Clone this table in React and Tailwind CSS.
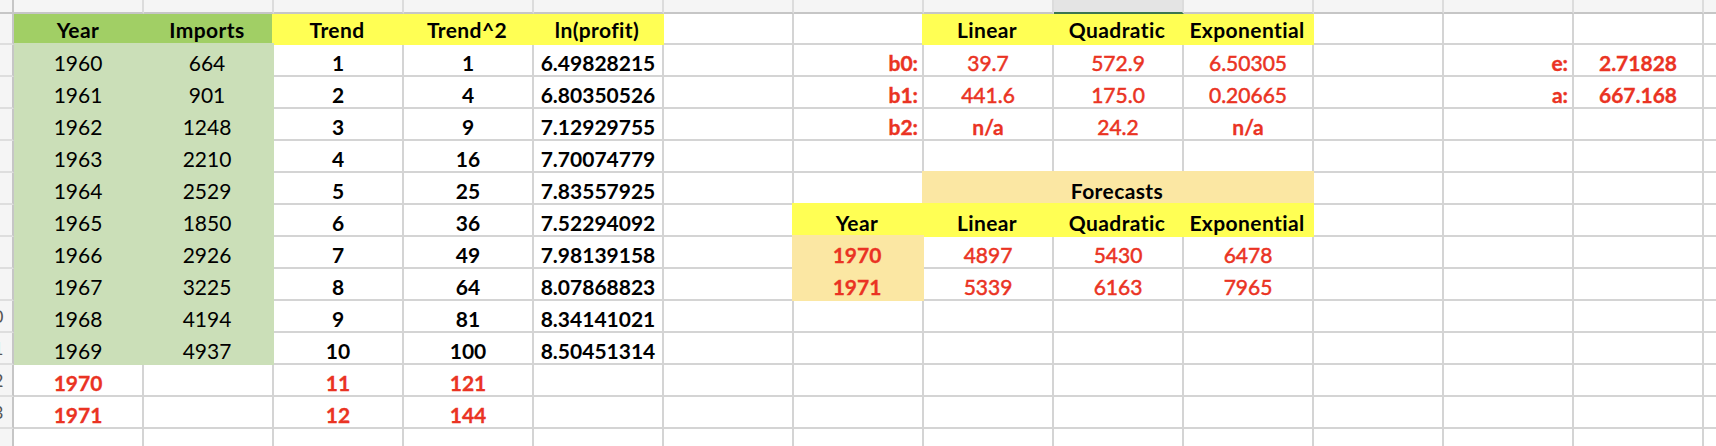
import React from "react";

const LETTERS = ["A", "B", "C", "D", "E", "F", "G", "H", "I", "J", "K", "L", "M", "N"];

const KIND = {
  gh: { fill: "bg-[#a1cf65]", text: "font-bold text-black justify-center tracking-[0.4px]" },
  gb: { fill: "bg-[#cbdfb8]", text: "font-normal text-black justify-center" },
  yh: { fill: "bg-[#ffff54]", text: "font-bold text-black justify-center tracking-[0.4px]" },
  th: { fill: "bg-[#fbe7a3]", text: "font-bold text-black justify-center tracking-[0.4px]" },
  tr: { fill: "bg-[#fbe7a3]", text: "font-bold text-[#ea3323] justify-center [-webkit-text-stroke:0.3px_#ea3323]" },
  b: { text: "font-bold text-black justify-center" },
  r: { text: "font-normal text-[#ea3323] justify-center [-webkit-text-stroke:0.5px_#ea3323]" },
  rb: { text: "font-bold text-[#ea3323] justify-center [-webkit-text-stroke:0.3px_#ea3323]" },
  rl: { text: "font-bold text-[#ea3323] justify-end pr-[4px] [-webkit-text-stroke:0.4px_#ea3323]" },
};

const DATA = {
  1: { A: ["Year", "gh"], B: ["Imports", "gh"], C: ["Trend", "yh"], D: ["Trend^2", "yh"], E: ["ln(profit)", "yh"], H: ["Linear", "yh"], I: ["Quadratic", "yh"], J: ["Exponential", "yh"] },
  2: { A: ["1960", "gb"], B: ["664", "gb"], C: ["1", "b"], D: ["1", "b"], E: ["6.49828215", "b"], G: ["b0:", "rl"], H: ["39.7", "r"], I: ["572.9", "r"], J: ["6.50305", "r"], L: ["e:", "rl"], M: ["2.71828", "rb"] },
  3: { A: ["1961", "gb"], B: ["901", "gb"], C: ["2", "b"], D: ["4", "b"], E: ["6.80350526", "b"], G: ["b1:", "rl"], H: ["441.6", "r"], I: ["175.0", "r"], J: ["0.20665", "r"], L: ["a:", "rl"], M: ["667.168", "rb"] },
  4: { A: ["1962", "gb"], B: ["1248", "gb"], C: ["3", "b"], D: ["9", "b"], E: ["7.12929755", "b"], G: ["b2:", "rl"], H: ["n/a", "rb"], I: ["24.2", "r"], J: ["n/a", "rb"] },
  5: { A: ["1963", "gb"], B: ["2210", "gb"], C: ["4", "b"], D: ["16", "b"], E: ["7.70074779", "b"] },
  6: { A: ["1964", "gb"], B: ["2529", "gb"], C: ["5", "b"], D: ["25", "b"], E: ["7.83557925", "b"], H: ["Forecasts", "th", 3] },
  7: { A: ["1965", "gb"], B: ["1850", "gb"], C: ["6", "b"], D: ["36", "b"], E: ["7.52294092", "b"], G: ["Year", "yh"], H: ["Linear", "yh"], I: ["Quadratic", "yh"], J: ["Exponential", "yh"] },
  8: { A: ["1966", "gb"], B: ["2926", "gb"], C: ["7", "b"], D: ["49", "b"], E: ["7.98139158", "b"], G: ["1970", "tr"], H: ["4897", "r"], I: ["5430", "r"], J: ["6478", "r"] },
  9: { A: ["1967", "gb"], B: ["3225", "gb"], C: ["8", "b"], D: ["64", "b"], E: ["8.07868823", "b"], G: ["1971", "tr"], H: ["5339", "r"], I: ["6163", "r"], J: ["7965", "r"] },
  10: { A: ["1968", "gb"], B: ["4194", "gb"], C: ["9", "b"], D: ["81", "b"], E: ["8.34141021", "b"] },
  11: { A: ["1969", "gb"], B: ["4937", "gb"], C: ["10", "b"], D: ["100", "b"], E: ["8.50451314", "b"] },
  12: { A: ["1970", "rb"], C: ["11", "rb"], D: ["121", "rb"] },
  13: { A: ["1971", "rb"], C: ["12", "rb"], D: ["144", "rb"] },
  14: {},
};

function StripRow() {
  const cells = [
    <div key="corner" className="bg-[#f5f5f5] border-r-2 border-b-2 border-r-[#c6c6c6] border-b-[#c6c6c6]" />,
  ];
  LETTERS.forEach((l, i) => {
    const selected = l === "I";
    cells.push(
      <div
        key={"h" + l}
        className={
          "relative overflow-hidden border-b-2 " +
          (selected ? "bg-[#e4e4e4] border-b-[#3b7550] " : "bg-[#f5f5f5] border-b-[#c6c6c6] ") +
          (i < 13 ? "border-r-2 border-r-[#dcdcdc]" : "")
        }
      >
        <span className="absolute inset-x-0 bottom-[11px] text-center text-[17px] leading-[17px] text-[#9a9a9a]">
          {l}
        </span>
      </div>
    );
  });
  return cells;
}

function RowHeader({ n, last }) {
  return (
    <div
      className={
        "relative overflow-hidden bg-[#f5f5f5] border-r-2 border-r-[#c6c6c6] flex items-center " +
        (last ? "" : "border-b-2 border-b-[#dedede]")
      }
    >
      {!last && (
        <span className="absolute left-[-21px] w-[28px] text-center text-[18px] leading-[18px] text-[#555555]">
          {n}
        </span>
      )}
    </div>
  );
}

export default function App() {
  const items = [...StripRow()];
  for (let r = 1; r <= 14; r++) {
    const last = r === 14;
    items.push(<RowHeader key={"rh" + r} n={r} last={last} />);
    const row = DATA[r];
    let c = 0;
    while (c < 14) {
      const l = LETTERS[c];
      const cell = row[l];
      const pad = r === 1 ? "pb-[3px]" : "pb-[2px]";
      if (c === 13) {
        items.push(
          <div key={r + l} className={last ? "" : "border-b-2 border-[#d4d4d4]"} />
        );
        c++;
        continue;
      }
      if (!cell) {
        items.push(
          <div
            key={r + l}
            className={"border-[#d4d4d4] " + (last ? "border-r-2" : "border-r-2 border-b-2")}
          />
        );
        c++;
        continue;
      }
      const [text, kind, span] = cell;
      const k = KIND[kind];
      let cls = "flex items-end whitespace-nowrap " + pad + " " + k.text + " ";
      if (k.fill) {
        cls += k.fill + " border-r-2 border-b-2 border-transparent ";
        if (c > 0) cls += "-ml-[2px] ";
        if (r > 1) cls += "-mt-[2px] ";
      } else {
        cls += "border-r-2 border-b-2 border-[#d4d4d4] ";
      }
      if (span === 3) cls += "col-span-3 ";
      items.push(
        <div key={r + l} className={cls}>
          {text}
        </div>
      );
      c += span || 1;
    }
  }

  return (
    <div className="w-[1716px] h-[446px] overflow-hidden bg-white font-[Lato,'Liberation_Sans',sans-serif] [font-variant-ligatures:none]">
      <div className="grid grid-cols-[14px_repeat(13,130px)_12px] grid-rows-[14px_31px_repeat(12,32px)_17px] text-[21px] leading-[21px]">
        {items}
      </div>
    </div>
  );
}
